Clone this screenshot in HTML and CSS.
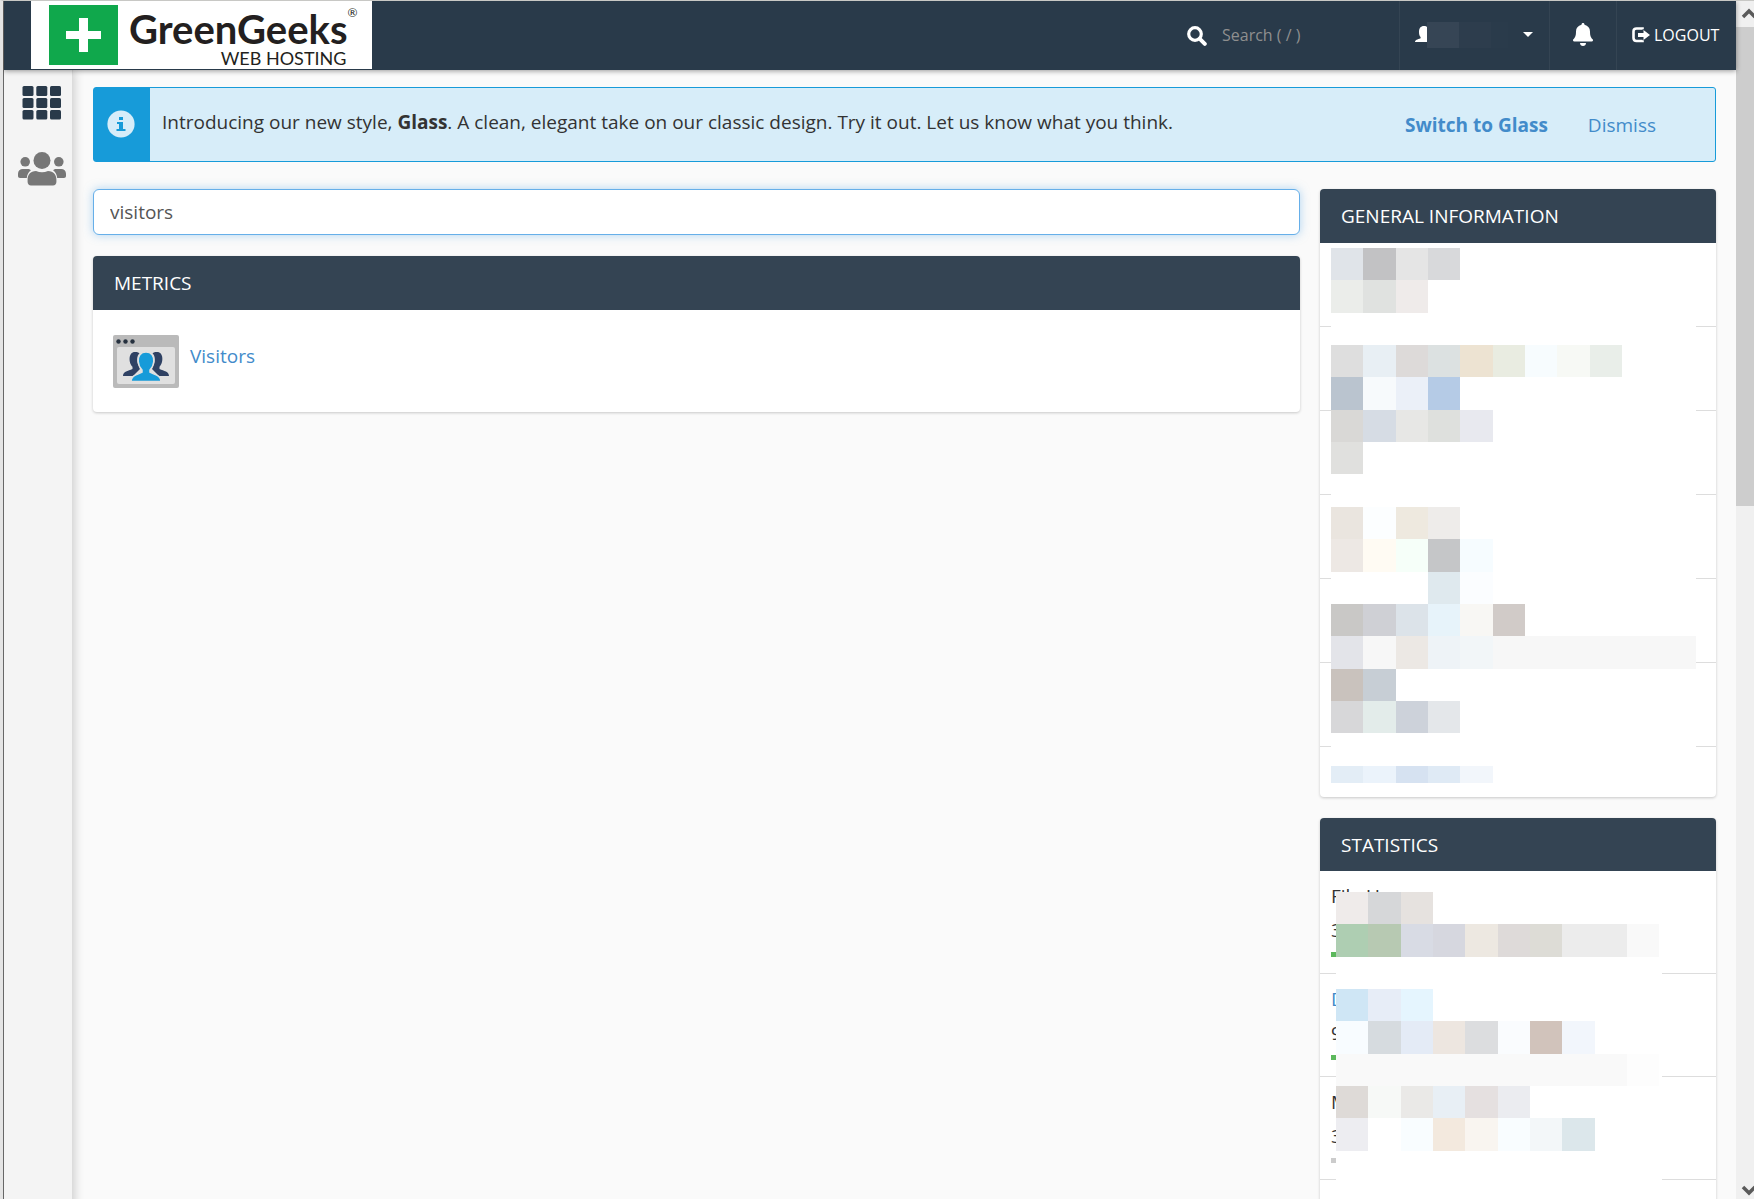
FILE: index.html
```html
<!DOCTYPE html>
<html lang="en">
<head>
<meta charset="utf-8">
<meta name="viewport" content="width=device-width, initial-scale=1">
<title>GreenGeeks Web Hosting</title>
<link rel="stylesheet" href="styles.css">
</head>
<body>
<div class="app">
  <header class="topbar">
    <a class="logo" href="#" aria-label="GreenGeeks Web Hosting">
      <svg class="logo-mark" viewBox="0 0 69 60" aria-hidden="true"><path fill="#10a84c" d="M0 0h69v60H0z"/><path fill="#fff" d="M30 13h9v13h13v8H39v13h-9V34H17v-8h13z"/></svg>
      <span class="logo-words">
        <span class="logo-name">GreenGeeks<sup class="logo-reg">®</sup></span>
        <span class="logo-sub">WEB HOSTING</span>
      </span>
    </a>
    <label class="search">
      <svg width="20" height="20" viewBox="0 0 20 20" aria-hidden="true"><circle cx="8" cy="8" r="6.3" fill="none" stroke="#fff" stroke-width="3.2"/><path d="M12.8 12.8l5 5" stroke="#fff" stroke-width="4" stroke-linecap="round"/></svg>
      <input class="search-input" type="text" placeholder="Search ( / )" aria-label="Search">
    </label>
    <button class="top-item user" type="button" aria-label="Account">
      <svg class="user-icon" width="93" height="26" viewBox="0 0 93 26" aria-hidden="true"><path fill="#fff" d="M9 4c3.600 0 5 2.500 5 6 0 2.400-.8 4-1.800 5v1.500c3 1.200 5 1.800 5 3.500H0c0-2 2.500-2.600 5.600-3.700V15C4.500 14 4 12.500 4 10c0-3.800 1.600-6 5-6z"/><path fill="#364555" d="M12 0h32v26H12z"/><path fill="#2d3d4d" d="M44 0h32v26H44z"/><path fill="#2a3b4b" d="M76 0h17v26H76z"/></svg>
      <svg width="10" height="6" viewBox="0 0 10 6" aria-hidden="true"><path fill="#fff" d="M0 0h10L5 5z"/></svg>
    </button>
    <button class="top-item bell" type="button" aria-label="Notifications">
      <svg width="20" height="23" viewBox="0 0 20 23" aria-hidden="true"><path fill="#fff" d="M10 0c.9 0 1.500.7 1.500 1.700C15 2.500 17 5 17 8.500c0 4.500 1 6.200 2.600 7.800.9 1 .3 2.200-.9 2.200H1.300c-1.200 0-1.800-1.200-.9-2.200C2 14.700 3 13 3 8.500 3 5 5 2.500 8.500 1.700 8.500.7 9.100 0 10 0zM7 20h6c0 1.700-1.300 3-3 3s-3-1.300-3-3z"/></svg>
    </button>
    <a class="top-item logout" href="#">
      <svg width="18" height="16" viewBox="0 0 18 16" aria-hidden="true"><path fill="none" stroke="#fff" stroke-width="2.600" d="M10.500 2.300V1.500H4.500C2.500 1.500 1.500 2.500 1.500 4.500v6.500c0 2 1 3 3 3h6v-.8"/><path fill="#fff" d="M6 6h5.500V3L18 8l-6.500 5v-3H6z"/></svg>
      <span>LOGOUT</span>
    </a>
  </header>
  <nav class="sidebar" aria-label="Main">
    <a class="side-link" href="#" aria-label="Home">
      <svg width="48" height="34" viewBox="0 0 48 34" aria-hidden="true"><g fill="#293a4a"><rect x="4.500" y="0" width="11" height="10" rx="1.500"/><rect x="18.300" y="0" width="11" height="10" rx="1.500"/><rect x="32" y="0" width="11" height="10" rx="1.500"/><rect x="4.500" y="12" width="11" height="10" rx="1.500"/><rect x="18.300" y="12" width="11" height="10" rx="1.500"/><rect x="32" y="12" width="11" height="10" rx="1.500"/><rect x="4.500" y="24" width="11" height="9.500" rx="1.500"/><rect x="18.300" y="24" width="11" height="9.500" rx="1.500"/><rect x="32" y="24" width="11" height="9.500" rx="1.500"/></g></svg>
    </a>
    <a class="side-link" href="#" aria-label="User Manager">
      <svg width="48" height="34" viewBox="0 0 48 34" aria-hidden="true"><g fill="#777"><circle cx="24" cy="8.500" r="8.500"/><circle cx="7.200" cy="9.800" r="4.800"/><circle cx="40.800" cy="9.800" r="4.800"/><path d="M4.800 17h4.700c1.500 0 2.600.5 3.400 1.300-2.400 1.900-3.700 4.200-4.100 7.700H2c-1.200 0-2-.8-2-2v-2.200C0 19 2 17 4.800 17zM43.200 17h-4.700c-1.500 0-2.600.5-3.400 1.300 2.400 1.900 3.700 4.200 4.100 7.700H46c1.200 0 2-.8 2-2v-2.200c0-2.800-2-4.800-4.800-4.800zM18 19c4 1.800 8 1.800 12 0 5.500 0 8.400 3.600 8.400 8.600v2.400c0 2-1.400 3.400-3.400 3.400H13c-2 0-3.400-1.400-3.400-3.400v-2.400c0-5 2.900-8.600 8.400-8.600z"/></g></svg>
    </a>
  </nav>
  <main class="content">
    <section class="notice">
      <div class="notice-icon">
        <svg width="28" height="28" viewBox="0 0 28 28" aria-hidden="true"><circle cx="14" cy="14" r="13.600" fill="#d7edf9"/><path fill="#179bd9" d="M12 7h4v3h-4zM10 12h6v7h2.500v2H9.500v-2H12v-5h-2z"/></svg>
      </div>
      <p class="notice-text">Introducing our new style, <strong>Glass</strong>. A clean, elegant take on our classic design. Try it out. Let us know what you think.</p>
      <a class="notice-switch" href="#">Switch to Glass</a>
      <a class="notice-dismiss" href="#">Dismiss</a>
    </section>
    <div class="columns">
      <div class="primary">
        <input class="filter" type="text" value="visitors" aria-label="Find functions">
        <section class="panel">
          <h2 class="panel-title">METRICS</h2>
          <a class="feature" href="#">
            <svg width="66" height="53" viewBox="0 0 66 53" aria-hidden="true"><rect width="66" height="53" rx="2" fill="#bababa"/><rect x="4" y="12" width="58" height="37" rx="2" fill="#e0e0e0"/><g fill="#26313f"><circle cx="5.500" cy="6.500" r="2.200"/><circle cx="12.500" cy="6.500" r="2.200"/><circle cx="19.500" cy="6.500" r="2.200"/></g><path fill="#2f4163" d="M22 17c2 0 3.300.4 4.500 1.200C23.500 21 23.500 27 26 31l1 3-7 7H10c0-4.500 5-5 9.500-7v-2.200C15.500 28 15 17 22 17zM44 17c-2 0-3.300.4-4.500 1.200C42.500 21 42.500 27 40 31l-1 3 7 7h10c0-4.500-5-5-9.500-7v-2.200C50.500 28 51 17 44 17z"/><path fill="#179bd9" stroke="#e0e0e0" stroke-width="1.500" d="M33 17c5.500 0 8.200 4 7.800 9.500-.3 4.300-1.800 6.500-3.800 8.500v2.200c4.500 2.500 11 3 11 9.300H18c0-6.300 6.500-6.800 11-9.300V35c-2-2-3.500-4.200-3.800-8.500C24.800 21 27.500 17 33 17z"/></svg>
            <span>Visitors</span>
          </a>
        </section>
      </div>
      <aside class="secondary">
        <section class="panel">
          <h2 class="panel-title">GENERAL INFORMATION</h2>
          <div class="panel-body">
            <ul class="rows info-rows"><li></li><li></li><li></li><li></li><li></li><li></li><li></li></ul>
            <svg class="redaction info-redaction" width="365" height="550" viewBox="0 0 365 550" shape-rendering="crispEdges" aria-hidden="true">
              <path fill="#fff" d="M0 0h365v550H0z"/>
              <path fill="#e0e4e9" d="M0 5h32v32H0z"/><path fill="#c2c2c4" d="M32 5h33v32H32z"/><path fill="#e5e5e5" d="M65 5h32v32H65z"/><path fill="#d8d9db" d="M97 5h32v32H97z"/>
              <path fill="#ebedea" d="M0 37h32v33H0z"/><path fill="#e0e2e0" d="M32 37h33v33H32z"/><path fill="#efebea" d="M65 37h32v33H65z"/>
              <path fill="#dedede" d="M0 102h32v32H0z"/><path fill="#e8eff4" d="M32 102h33v32H32z"/><path fill="#dddad9" d="M65 102h32v32H65z"/><path fill="#dce1e1" d="M97 102h32v32H97z"/><path fill="#ede3d2" d="M129 102h33v32h-33z"/><path fill="#e9ece1" d="M162 102h32v32h-32z"/><path fill="#f7fcfe" d="M194 102h32v32h-32z"/><path fill="#f7f9f5" d="M226 102h33v32h-33z"/><path fill="#e9eee9" d="M259 102h32v32h-32z"/>
              <path fill="#bac4cf" d="M0 134h32v33H0z"/><path fill="#f7fafc" d="M32 134h33v33H32z"/><path fill="#ebf0f8" d="M65 134h32v33H65z"/><path fill="#b5cbe6" d="M97 134h32v33H97z"/>
              <path fill="#d9d8d6" d="M0 167h32v32H0z"/><path fill="#d6dce4" d="M32 167h33v32H32z"/><path fill="#e7e7e5" d="M65 167h32v32H65z"/><path fill="#dee0dd" d="M97 167h32v32H97z"/><path fill="#e8e9ef" d="M129 167h33v32h-33z"/>
              <path fill="#e0e0de" d="M0 199h32v32H0z"/>
              <path fill="#eae5df" d="M0 264h32v32H0z"/><path fill="#fcfeff" d="M32 264h33v32H32z"/><path fill="#eee9df" d="M65 264h32v32H65z"/><path fill="#eeecea" d="M97 264h32v32H97z"/>
              <path fill="#ede8e4" d="M0 296h32v33H0z"/><path fill="#fffbf3" d="M32 296h33v33H32z"/><path fill="#f6fff9" d="M65 296h32v33H65z"/><path fill="#c5c6c8" d="M97 296h32v33H97z"/><path fill="#f6fcff" d="M129 296h33v33h-33z"/>
              <path fill="#dfe9ee" d="M97 329h32v32H97z"/><path fill="#fbfdff" d="M129 329h33v32h-33z"/>
              <path fill="#c9c8c6" d="M0 361h32v32H0z"/><path fill="#cfd0d5" d="M32 361h33v32H32z"/><path fill="#dce3e9" d="M65 361h32v32H65z"/><path fill="#e7f3fa" d="M97 361h32v32H97z"/><path fill="#f8f7f4" d="M129 361h33v32h-33z"/><path fill="#d1cbc8" d="M162 361h32v32h-32z"/>
              <path fill="#f7f7f7" d="M0 393h365v33H0z"/><path fill="#e3e4e9" d="M0 393h32v33H0z"/><path fill="#ece8e4" d="M65 393h32v33H65z"/><path fill="#eef3f7" d="M97 393h32v33H97z"/><path fill="#f2f6f8" d="M129 393h33v33h-33z"/>
              <path fill="#c9c2bd" d="M0 426h32v32H0z"/><path fill="#c7ced5" d="M32 426h33v32H32z"/>
              <path fill="#d7d7d9" d="M0 458h32v32H0z"/><path fill="#e3ecea" d="M32 458h33v32H32z"/><path fill="#cdd2da" d="M65 458h32v32H65z"/><path fill="#e4e7ea" d="M97 458h32v32H97z"/>
              <path fill="#e3edf6" d="M0 523h32v17H0z"/><path fill="#ebf3fb" d="M32 523h33v17H32z"/><path fill="#d6e2f1" d="M65 523h32v17H65z"/><path fill="#dfeaf5" d="M97 523h32v17H97z"/><path fill="#f2f6fb" d="M129 523h33v17h-33z"/>
            </svg>
          </div>
        </section>
        <section class="panel">
          <h2 class="panel-title stats-title">STATISTICS</h2>
          <div class="panel-body">
            <ul class="rows stats-rows">
              <li><span>File U</span><span>3</span><i class="meter"></i></li>
              <li><a href="#">D</a><span>9</span><i class="meter"></i></li>
              <li><span>M</span><span>3</span><i class="meter meter-empty"></i></li>
              <li></li>
            </ul>
            <svg class="redaction stats-redaction" width="326" height="390" viewBox="0 0 326 390" shape-rendering="crispEdges" aria-hidden="true">
              <path fill="#fff" d="M0 0h326v390H0z"/>
              <path fill="#efebea" d="M0 0h32v32H0z"/><path fill="#d6d7d9" d="M32 0h33v32H32z"/><path fill="#e6e2df" d="M65 0h32v32H65z"/>
              <path fill="#aeceb2" d="M0 32h32v33H0z"/><path fill="#b7c9b2" d="M32 32h33v33H32z"/><path fill="#d8dbe4" d="M65 32h32v33H65z"/><path fill="#d6d7df" d="M97 32h32v33H97z"/><path fill="#ede8e1" d="M129 32h33v33h-33z"/><path fill="#dedad9" d="M162 32h32v33h-32z"/><path fill="#dddcd6" d="M194 32h32v33h-32z"/><path fill="#ececec" d="M226 32h65v33h-65z"/><path fill="#f9f9f9" d="M291 32h32v33h-32z"/>
              <path fill="#cfe6f5" d="M0 97h32v32H0z"/><path fill="#e7edf7" d="M32 97h33v32H32z"/><path fill="#e5f5fe" d="M65 97h32v32H65z"/>
              <path fill="#f8fcff" d="M0 129h32v33H0z"/><path fill="#d6dbdf" d="M32 129h33v33H32z"/><path fill="#e4ebf6" d="M65 129h32v33H65z"/><path fill="#ede6e0" d="M97 129h32v33H97z"/><path fill="#dcdddf" d="M129 129h33v33h-33z"/><path fill="#fafcfe" d="M162 129h32v33h-32z"/><path fill="#d1c3bb" d="M194 129h32v33h-32z"/><path fill="#f2f6fc" d="M226 129h33v33h-33z"/>
              <path fill="#f9f9f9" d="M0 162h291v32H0z"/><path fill="#fdfdfd" d="M291 162h32v32h-32z"/>
              <path fill="#dedad7" d="M0 194h32v32H0z"/><path fill="#f7f9f7" d="M32 194h33v32H32z"/><path fill="#eae9e7" d="M65 194h32v32H65z"/><path fill="#e8eff5" d="M97 194h32v32H97z"/><path fill="#e5e0e0" d="M129 194h33v32h-33z"/><path fill="#ebecf0" d="M162 194h32v32h-32z"/>
              <path fill="#ededf1" d="M0 226h32v33H0z"/><path fill="#f9fdff" d="M65 226h32v33H65z"/><path fill="#f3e9de" d="M97 226h32v33H97z"/><path fill="#f9f5f0" d="M129 226h33v33h-33z"/><path fill="#f9fdff" d="M162 226h32v33h-32z"/><path fill="#f3f7f9" d="M194 226h32v33h-32z"/><path fill="#dce7eb" d="M226 226h33v33h-33z"/>
            </svg>
          </div>
        </section>
      </aside>
    </div>
  </main>
</div>
<div class="scrollbar" aria-hidden="true">
  <svg class="scroll-arrow" viewBox="0 0 18 26"><path fill="none" stroke="#5a5a5a" stroke-width="3.500" d="M7 16l6-6 6 6"/></svg>
  <div class="scroll-thumb"></div>
  <svg class="scroll-arrow scroll-down" viewBox="0 0 18 26"><path fill="none" stroke="#5a5a5a" stroke-width="3.500" d="M7 14l6 6 6-6"/></svg>
</div>
</body>
</html>
```
FILE: styles.css
```css
* { box-sizing: border-box; }

body {
  margin: 0;
  height: 100vh;
  display: flex;
  overflow: hidden;
  border-top: 1px solid #c8c8c5;
  border-left: 3px solid #e4e4e4;
  background: #fafafa;
  color: #333;
  font: 19px/24px "Open Sans", "Noto Sans", sans-serif;
}

a { color: #428bca; text-decoration: none; }

.app {
  flex: 1;
  min-width: 0;
  display: grid;
  grid-template: 69px 1fr / 68px 1fr;
  border-left: 1px solid #6e6e6e;
}

.topbar {
  grid-column: 1 / -1;
  z-index: 2;
  display: flex;
  align-items: stretch;
  padding: 0 0 0 27px;
  background: #293a4a;
  box-shadow: 0 1px 5px rgba(0, 0, 0, .4);
}

.logo {
  display: flex;
  align-items: flex-start;
  gap: 11px;
  width: 341px;
  height: 68px;
  padding: 4px 0 0 18px;
  margin-right: auto;
  background: #fff;
  color: #231f20;
}

.logo-mark { width: 69px; height: 60px; }

.logo-words {
  display: flex;
  flex-direction: column;
  align-items: flex-end;
  font-family: Lato, "Open Sans", sans-serif;
}

.logo-name {
  display: flex;
  font-size: 40px;
  font-weight: 700;
  line-height: 48px;
  height: 42px;
}

.logo-reg { font-size: 12px; line-height: 16px; font-weight: 400; }

.logo-sub {
  padding-right: 11px;
  font-size: 18px;
  line-height: 22px;
}

.search {
  display: flex;
  align-items: center;
  gap: 13px;
  width: 212px;
}

.search-input {
  width: 140px;
  border: 0;
  padding: 0 2px 2px;
  background: none;
  color: #fff;
  font: 16px/24px "Open Sans", "Noto Sans", sans-serif;
}

.search-input::placeholder { color: #8f8f8f; opacity: 1; }

.top-item {
  display: flex;
  align-items: center;
  border: 0;
  border-left: 1px solid #344453;
  padding: 0 0 2px;
  background: none;
  color: #fff;
  font-size: 16px;
}

.user { width: 150px; padding-left: 15px; gap: 15px; }
.bell { width: 67px; justify-content: center; }
.logout { width: 120px; gap: 4px; padding-left: 15px; }

.sidebar {
  z-index: 1;
  display: flex;
  flex-direction: column;
  align-items: flex-end;
  gap: 32px;
  padding: 16px 6px 0 0;
  background: #f4f4f4;
  box-shadow: 1px 0 0 #dcdcdc, 2px 0 10px rgba(0, 0, 0, .2);
}

.side-link { display: block; height: 34px; }

.content {
  min-width: 0;
  padding: 17px 20px 0 21px;
}

.notice {
  display: flex;
  align-items: center;
  height: 75px;
  margin-bottom: 27px;
  padding-right: 59px;
  border: 1px solid #179bd9;
  border-radius: 3px;
  background: #d7edf9;
}

.notice-icon {
  display: flex;
  align-items: center;
  justify-content: center;
  align-self: stretch;
  width: 56px;
  padding: 0 2px 2px 0;
  background: #179bd9;
}

.notice-text { margin: 0 auto 0 12px; padding-bottom: 5px; }
.notice-switch { font-weight: 700; }
.notice-dismiss { margin-left: 40px; }

.columns {
  display: grid;
  grid-template-columns: minmax(0, 1fr) 396px;
  gap: 20px;
}

.filter {
  display: block;
  width: 100%;
  height: 46px;
  margin-bottom: 21px;
  padding: 0 16px;
  border: 1px solid #66afe9;
  border-radius: 6px;
  outline: 0;
  background: #fff;
  box-shadow: 0 0 10px rgba(102, 175, 233, .5);
  color: #555;
  font: inherit;
}

.panel {
  margin-bottom: 21px;
  border-radius: 4px;
  background: #fff;
  box-shadow: 0 1px 3px rgba(0, 0, 0, .2);
}

.panel-title {
  margin: 0;
  padding: 15px 21px;
  border-radius: 4px 4px 0 0;
  background: #344453;
  color: #fff;
  font-size: 19px;
  font-weight: 400;
  line-height: 24px;
}

.stats-title { padding-bottom: 14px; }

.feature {
  display: flex;
  gap: 11px;
  padding: 25px 20px 24px;
}

.feature span { padding-top: 9px; }

.panel-body { position: relative; }

.rows {
  margin: 0;
  padding: 0;
  list-style: none;
}

.rows li { border-bottom: 1px solid #ddd; }
.rows li:last-child { border-bottom: 0; }

.info-rows li { height: 84px; }
.info-rows li:last-child { height: 50px; }

.stats-rows li {
  display: flex;
  flex-direction: column;
  align-items: flex-start;
  gap: 10px;
  height: 103px;
  padding: 13px 11px;
}

.meter { width: 40px; height: 5px; background: #5cb85c; }
.meter-empty { background: #ccc; }

.redaction { position: absolute; left: 11px; }
.info-redaction { top: 0; }
.stats-redaction { top: 21px; left: 16px; }

.scrollbar {
  display: flex;
  flex-direction: column;
  width: 18px;
  background: #f0f0f0;
}

.scroll-arrow { flex: none; width: 18px; height: 26px; }
.scroll-thumb { height: 40%; background: #cdcdcd; }
.scroll-down { margin-top: auto; }
```
